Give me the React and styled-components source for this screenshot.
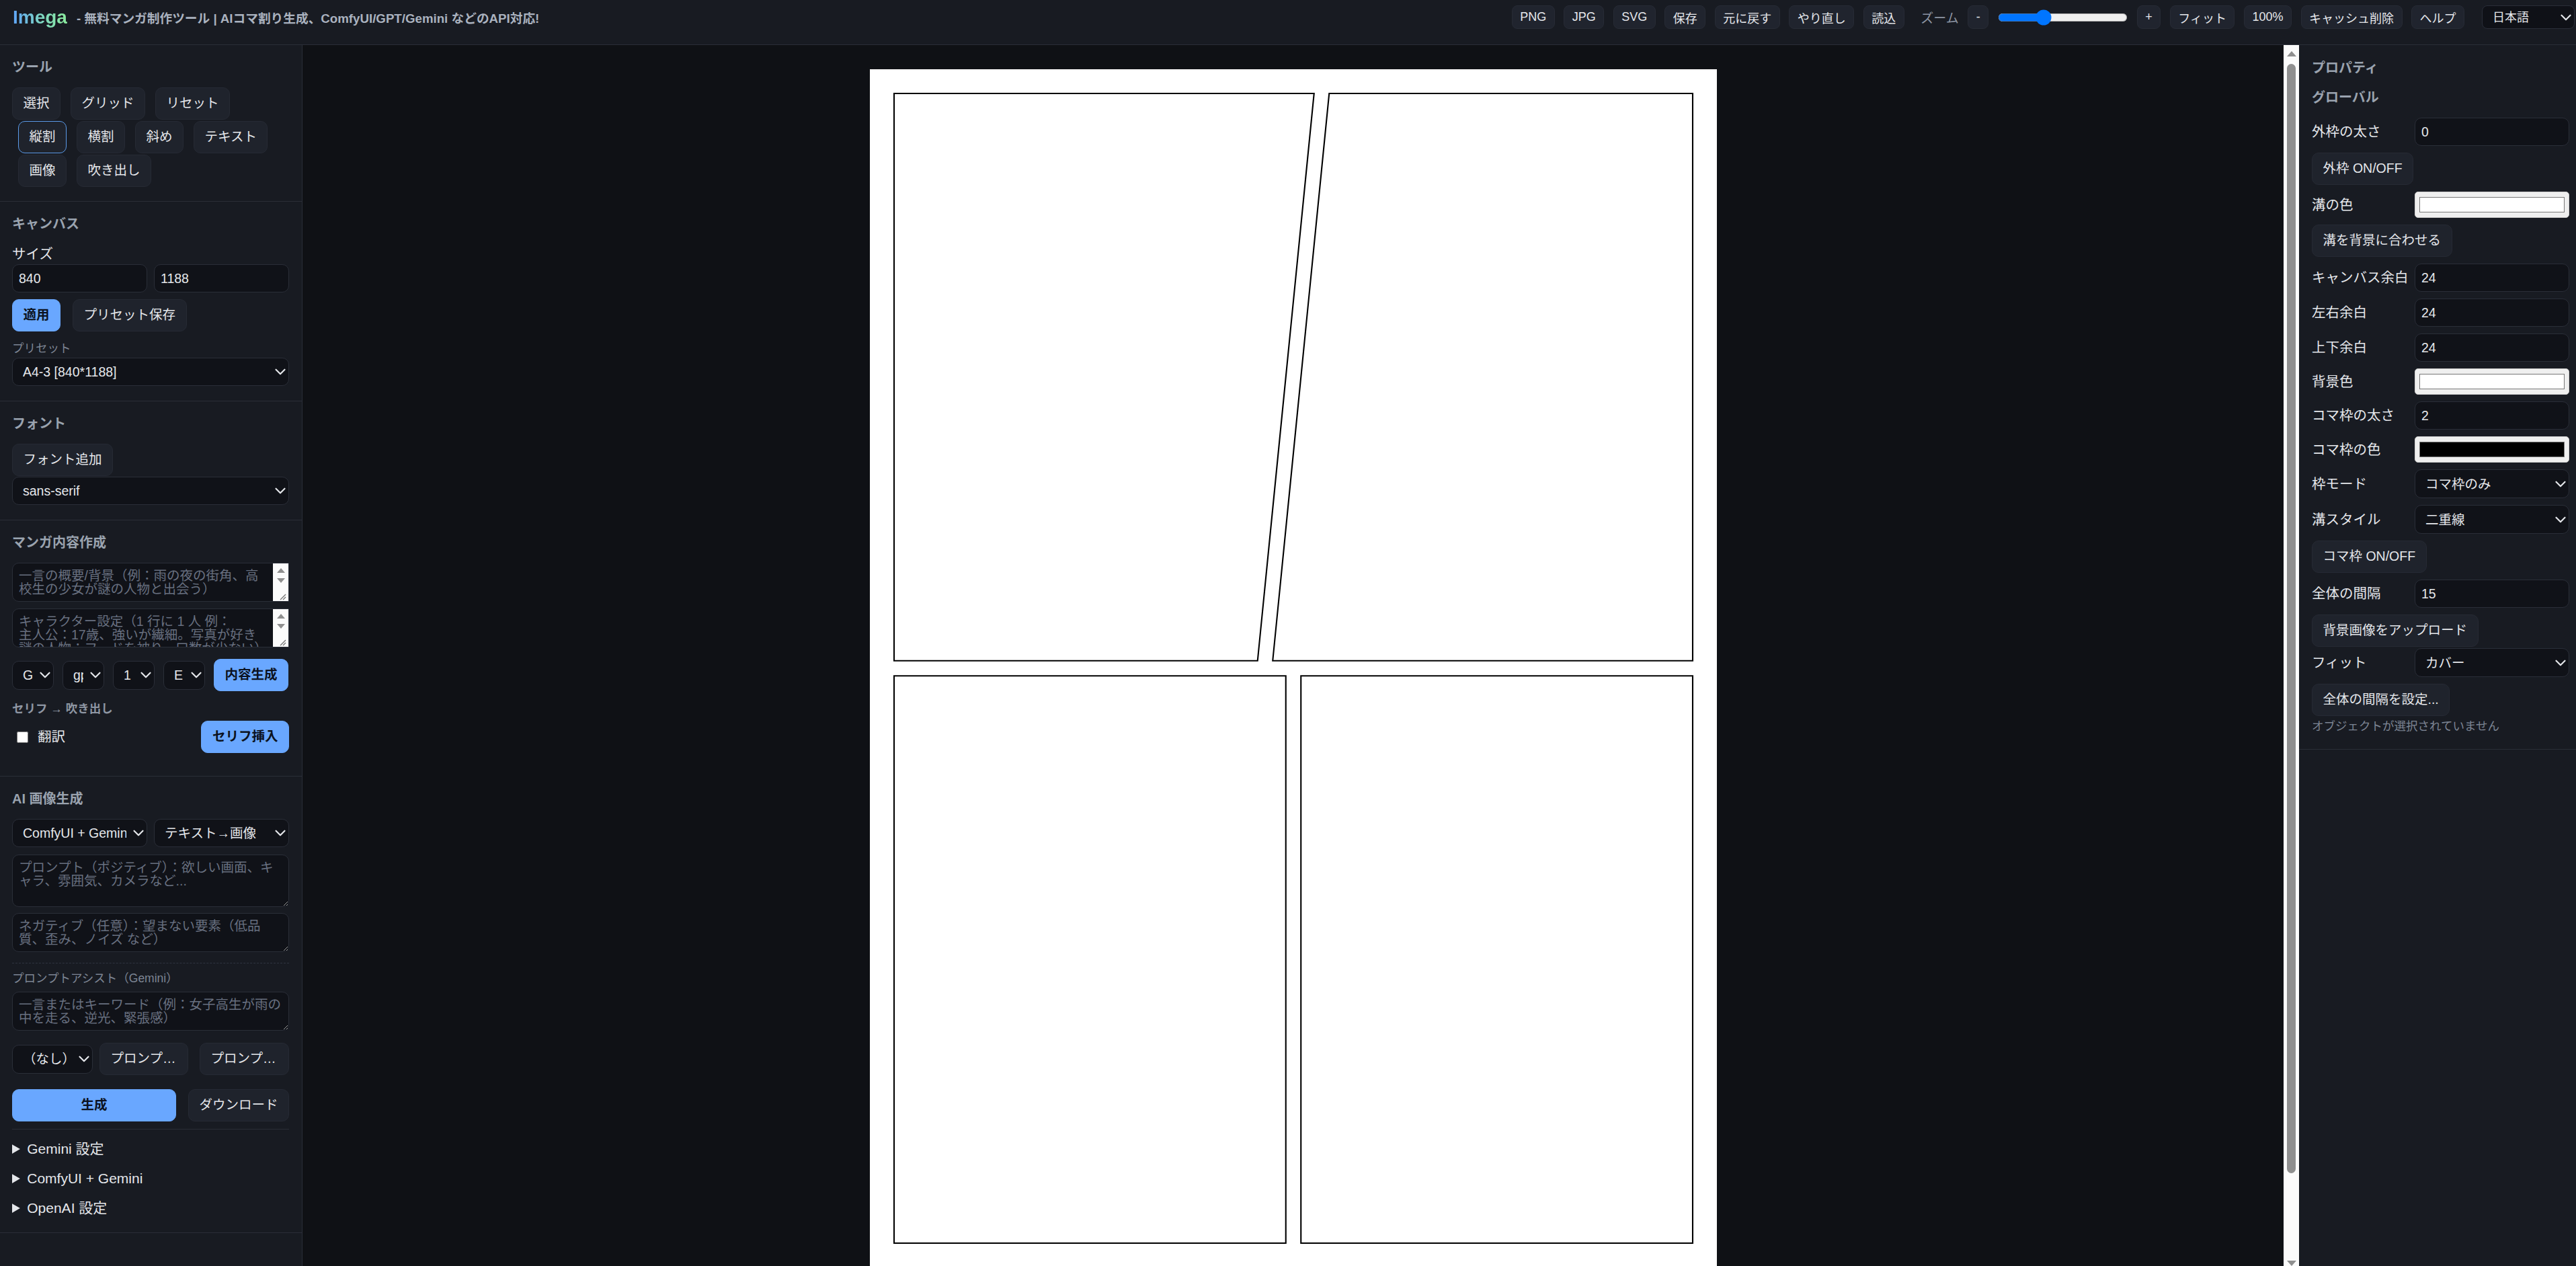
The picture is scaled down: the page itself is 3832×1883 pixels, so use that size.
import React from 'react'
import styled, { createGlobalStyle } from 'styled-components'
import { ChevronDown } from 'lucide-react'

const GlobalStyle = createGlobalStyle`
  html, body { margin: 0; height: 100%; background: #0f1115; }
  body {
    font-family: "Liberation Sans", "Noto Sans CJK JP", sans-serif;
    color: #e5e7eb;
    overflow: hidden;
  }
  * { box-sizing: border-box; }
`

// ---------- header ----------
const Shell = styled.div`
  height: 100vh;
  display: flex;
  flex-direction: column;
`

const TopBar = styled.header`
  flex: none;
  height: 67px;
  display: flex;
  align-items: center;
  padding: 0 2px 15px 19px;
  background: #181b22;
  border-bottom: 1px solid #2a2e37;
`

const Logo = styled.span`
  font-size: 28px;
  font-weight: 700;
  line-height: 35px;
  background: linear-gradient(90deg, #5fa4f8 0%, #7fd9c0 55%, #8aea9c 100%);
  -webkit-background-clip: text;
  background-clip: text;
  color: transparent;
`

const Tagline = styled.span`
  margin-left: 14px;
  font-size: 18.7px;
  font-weight: 600;
  color: #aab2bf;
  white-space: nowrap;
`

const TopActions = styled.div`
  margin-left: auto;
  display: flex;
  align-items: center;
  gap: 13.5px;
`

const TopButton = styled.button`
  height: 35px;
  padding: 0 11.5px;
  font-family: inherit;
  font-size: 18px;
  color: #e5e7eb;
  background: #20242e;
  border: 1px solid #272b35;
  border-radius: 8px;
  white-space: nowrap;
`

const ZoomLabel = styled.span`
  margin-left: 11px;
  font-size: 19px;
  color: #8d95a3;
`

const ZoomRange = styled.input`
  zoom: 1.5;
  width: 129px;
  margin: 0;
`

// ---------- select with caret ----------
const SelectWrap = styled.div`
  position: relative;
  flex: none;
  width: ${p => (p.$w ? `${p.$w}px` : '100%')};
  min-width: 0;
  margin-top: ${p => p.$mt ?? 0}px;
  margin-left: ${p => p.$ml ?? 0}px;
`

const SelectField = styled.select`
  display: block;
  appearance: none;
  -webkit-appearance: none;
  width: 100%;
  height: ${p => p.$h ?? 42}px;
  padding: 0 30px 0 15px;
  font-family: inherit;
  font-size: ${p => (p.$h === 35 ? 18 : 19.5)}px;
  color: #e5e7eb;
  background: ${p => (p.$h === 35 ? '#0f1117' : '#101218')};
  border: 1px solid #2a2e38;
  border-radius: ${p => (p.$h === 35 ? 8 : 10)}px;
  white-space: nowrap;
  overflow: hidden;
`

const Caret = styled(ChevronDown)`
  position: absolute;
  right: 0;
  top: 50%;
  transform: translateY(-50%);
  color: #e5e7eb;
  pointer-events: none;
`

const Dropdown = ({ w, h, mt, ml, value, children }) => (
  <SelectWrap $w={w} $mt={mt} $ml={ml}>
    <SelectField $h={h} defaultValue={value}>{children}</SelectField>
    <Caret size={26} strokeWidth={2} />
  </SelectWrap>
)

// ---------- layout ----------
const Body = styled.div`
  flex: 1;
  display: flex;
  min-height: 0;
`

const LeftPanel = styled.aside`
  flex: none;
  width: 450px;
  background: #181b22;
  border-right: 1px solid #2a2e37;
  overflow: hidden;
`

const Section = styled.section`
  display: flex;
  flex-direction: column;
  padding: 21px 19px ${p => p.$pb ?? 22}px 18px;
  border-bottom: 1px solid #2a2e37;
`

const SectionTitle = styled.h3`
  margin: 0 0 18px;
  font-size: 20px;
  line-height: 24px;
  font-weight: 700;
  color: #9aa3af;
`

const ToolRow = styled.div`
  display: flex;
  gap: 15px;
  padding-left: ${p => (p.$indent ? 9 : 0)}px;
  & + & { margin-top: 2px; }
`

const Btn = styled.button`
  flex: ${p => (p.$grow ? 1 : 'none')};
  width: ${p => (p.$w ? `${p.$w}px` : 'auto')};
  height: 48px;
  margin-left: ${p => (p.$push ? 'auto' : '0')};
  padding: 0 15.5px;
  font-family: inherit;
  font-size: 19.5px;
  line-height: 1;
  font-weight: ${p => (p.$primary ? 700 : 400)};
  color: ${p => (p.$primary ? '#0b1220' : '#e5e7eb')};
  background: ${p => (p.$primary ? '#69a7ff' : '#1f232c')};
  border: ${p => (p.$active ? '1.5px solid #5b9bea' : p.$primary ? '1px solid #69a7ff' : '1px solid #262a34')};
  border-radius: 10px;
  white-space: nowrap;
  overflow: hidden;
  text-overflow: ellipsis;
  align-self: flex-start;
`

const FieldLabel = styled.div`
  font-size: 20.5px;
  line-height: 30px;
  color: #e5e7eb;
  white-space: nowrap;
`

const SmallLabel = styled.div`
  margin-top: ${p => p.$mt ?? 0}px;
  font-size: 17.5px;
  line-height: 24px;
  font-weight: ${p => (p.$bold ? 700 : 400)};
  color: ${p => (p.$bold ? '#8e96a3' : '#7d8594')};
`

const Pair = styled.div`
  display: grid;
  grid-template-columns: 1fr 1fr;
  column-gap: 10px;
  margin-top: ${p => p.$mt ?? 0}px;
`

const TextInput = styled.input`
  display: block;
  width: 100%;
  min-width: 0;
  height: 42px;
  padding: 0 9px;
  font-family: inherit;
  font-size: 19.5px;
  color: #e5e7eb;
  background: #101218;
  border: 1px solid #2a2e38;
  border-radius: 10px;
`

const ButtonRow = styled.div`
  display: flex;
  align-items: center;
  gap: ${p => p.$gap ?? 18}px;
  margin-top: ${p => p.$mt ?? 0}px;
`

const TextArea = styled.textarea`
  display: block;
  width: 100%;
  height: ${p => (p.$tall ? 78 : 58)}px;
  margin-top: ${p => p.$mt ?? 0}px;
  padding: 8px 9px;
  font-family: inherit;
  font-size: 19.5px;
  line-height: 20px;
  color: #e5e7eb;
  background: #101218;
  border: 1px solid #2a2e38;
  border-radius: 10px;
  resize: vertical;
  overflow: hidden;
  &::placeholder { color: #687080; }
`

// textarea with a light classic scrollbar on its right side
const ScrollBox = styled.div`
  display: flex;
  height: 58px;
  margin-top: ${p => p.$mt ?? 0}px;
  background: #101218;
  border: 1px solid #2a2e38;
  border-radius: 10px 0 0 10px;
  overflow: hidden;
`

const BoxText = styled(TextArea)`
  flex: 1;
  min-width: 0;
  height: 100%;
  margin: 0;
  border: none;
  border-radius: 0;
  background: transparent;
  resize: none;
`

const MiniRail = styled.div`
  flex: none;
  width: 23px;
  display: flex;
  flex-direction: column;
  align-items: center;
  background: #fbfbfb;
  padding-top: 4px;
`

const Arrow = styled.div`
  width: 0;
  height: 0;
  border-left: ${p => p.$size ?? 6}px solid transparent;
  border-right: ${p => p.$size ?? 6}px solid transparent;
  ${p => (p.$down ? 'border-top' : 'border-bottom')}: ${p => (p.$size ?? 6) + 1}px solid #8f8f8f;
  margin-top: ${p => p.$mt ?? 0}px;
`

const Grip = styled.svg`
  margin-top: auto;
  align-self: flex-end;
  display: block;
`

const CheckRow = styled.div`
  display: flex;
  align-items: center;
  margin-top: 6px;
`

const Check = styled.input`
  width: 17px;
  height: 17px;
  margin: 0 14px 0 7px;
`

const DashedRule = styled.hr`
  margin: 16px 0 0;
  border: none;
  border-top: 1px dashed #2f3440;
`

const Rule = styled.hr`
  margin: 11px 0 0;
  border: none;
  border-top: 1px solid #2a2e37;
`

const Disclosures = styled.div`
  display: flex;
  flex-direction: column;
  gap: 14px;
  margin: 14px 0 21px;
`

const Summary = styled.summary`
  font-size: 21px;
  line-height: 30px;
  color: #e5e7eb;
  cursor: pointer;
`

// ---------- stage ----------
const Stage = styled.div`
  flex: 1;
  min-width: 0;
  display: flex;
  background: #0f1115;
`

const Viewport = styled.main`
  flex: 1;
  min-width: 0;
  overflow: hidden;
  padding-top: 36px;
`

const Page = styled.svg`
  display: block;
  margin: 0 auto;
  width: 1260px;
  height: 1782px;
  background: #fff;
`

const Rail = styled.div`
  flex: none;
  width: 23px;
  display: flex;
  flex-direction: column;
  align-items: center;
  background: #fbfbfb;
  padding-top: 9px;
`

const RailThumb = styled.div`
  width: 13px;
  height: 1650px;
  margin-top: 11px;
  border-radius: 7px;
  background: #8f8f8f;
`

const RailEnd = styled.div`
  margin-top: auto;
  height: 8px;
  overflow: hidden;
`

// ---------- right panel ----------
const RightPanel = styled.aside`
  flex: none;
  width: 412px;
  background: #181b22;
  overflow: hidden;
`

const PropsBlock = styled.div`
  display: flex;
  flex-direction: column;
  padding: 22px 10px 22px 19px;
  border-bottom: 1px solid #2a2e37;
`

const PanelTitle = styled.h3`
  margin: 0 0 ${p => p.$mb ?? 20}px;
  font-size: 20px;
  line-height: 24px;
  font-weight: 700;
  color: #9aa3af;
`

const PropList = styled.div`
  display: flex;
  flex-direction: column;
  gap: 10px;
`

const Field = styled.div`
  display: grid;
  grid-template-columns: 147px 1fr;
  column-gap: 6px;
  align-items: center;
  margin-top: ${p => (p.$snug ? -8 : 0)}px;
`

const ColorInput = styled.input`
  display: block;
  width: 100%;
  height: 39px;
  padding: 0 6px;
  background: #efefef;
  border: 1px solid #cfcfcf;
  border-radius: 5px;
  &::-webkit-color-swatch-wrapper { padding: 7px 0; }
  &::-webkit-color-swatch { border: 1px solid #777; border-radius: 0; }
`

const Hint = styled.div`
  margin-top: -7px;
  font-size: 17.5px;
  line-height: 24px;
  color: #7d8594;
`

const noop = () => {}

const ScrollText = ({ mt, placeholder }) => (
  <ScrollBox $mt={mt}>
    <BoxText placeholder={placeholder} />
    <MiniRail>
      <Arrow $mt={3} />
      <Arrow $down $mt={8} />
      <Grip width="23" height="21" viewBox="0 0 23 21">
        <path d="M19 11 L11 19 M19 15 L15 19" stroke="#777" strokeWidth="1.4" />
      </Grip>
    </MiniRail>
  </ScrollBox>
)

const App = () => {
  return (
    <Shell>
      <GlobalStyle />
      <TopBar>
        <Logo>Imega</Logo>
        <Tagline>- 無料マンガ制作ツール | AIコマ割り生成、ComfyUI/GPT/Gemini などのAPI対応!</Tagline>
        <TopActions>
          <TopButton>PNG</TopButton>
          <TopButton>JPG</TopButton>
          <TopButton>SVG</TopButton>
          <TopButton>保存</TopButton>
          <TopButton>元に戻す</TopButton>
          <TopButton>やり直し</TopButton>
          <TopButton>読込</TopButton>
          <ZoomLabel>ズーム</ZoomLabel>
          <TopButton>-</TopButton>
          <ZoomRange type="range" min="0.25" max="4" step="0.05" defaultValue="1.5" />
          <TopButton>+</TopButton>
          <TopButton>フィット</TopButton>
          <TopButton>100%</TopButton>
          <TopButton>キャッシュ削除</TopButton>
          <TopButton>ヘルプ</TopButton>
        </TopActions>
        <Dropdown w={138} h={35} ml={26} value="ja">
          <option value="ja">日本語</option>
          <option value="en">English</option>
        </Dropdown>
      </TopBar>

      <Body>
        <LeftPanel>
          <Section $pb={21}>
            <SectionTitle>ツール</SectionTitle>
            <ToolRow>
              <Btn>選択</Btn>
              <Btn>グリッド</Btn>
              <Btn>リセット</Btn>
            </ToolRow>
            <ToolRow $indent>
              <Btn $active>縦割</Btn>
              <Btn>横割</Btn>
              <Btn>斜め</Btn>
              <Btn>テキスト</Btn>
            </ToolRow>
            <ToolRow $indent>
              <Btn>画像</Btn>
              <Btn>吹き出し</Btn>
            </ToolRow>
          </Section>

          <Section>
            <SectionTitle>キャンバス</SectionTitle>
            <FieldLabel>サイズ</FieldLabel>
            <Pair>
              <TextInput defaultValue="840" />
              <TextInput defaultValue="1188" />
            </Pair>
            <ButtonRow $mt={10}>
              <Btn $primary>適用</Btn>
              <Btn>プリセット保存</Btn>
            </ButtonRow>
            <SmallLabel $mt={13}>プリセット</SmallLabel>
            <Dropdown mt={2} value="a4">
              <option value="a4">A4-3 [840*1188]</option>
            </Dropdown>
          </Section>

          <Section>
            <SectionTitle>フォント</SectionTitle>
            <Btn>フォント追加</Btn>
            <Dropdown mt={1} value="sans">
              <option value="sans">sans-serif</option>
            </Dropdown>
          </Section>

          <Section $pb={34}>
            <SectionTitle>マンガ内容作成</SectionTitle>
            <ScrollText placeholder="一言の概要/背景（例：雨の夜の街角、高校生の少女が謎の人物と出会う）" />
            <ScrollText
              mt={10}
              placeholder={'キャラクター設定（1 行に 1 人 例：\n主人公：17歳、強いが繊細。写真が好き\n謎の人物：フードを被り、口数が少ない）'}
            />
            <ButtonRow $gap={13} $mt={17}>
              <Dropdown w={62} h={43} value="g">
                <option value="g">Gemini</option>
              </Dropdown>
              <Dropdown w={62} h={43} value="m">
                <option value="m">gpt-4o-mini</option>
              </Dropdown>
              <Dropdown w={62} h={43} value="1">
                <option value="1">1</option>
              </Dropdown>
              <Dropdown w={62} h={43} value="e">
                <option value="e">E</option>
              </Dropdown>
              <Btn $primary>内容生成</Btn>
            </ButtonRow>
            <SmallLabel $bold $mt={14}>セリフ → 吹き出し</SmallLabel>
            <CheckRow>
              <Check type="checkbox" />
              <FieldLabel>翻訳</FieldLabel>
              <Btn $primary $push>セリフ挿入</Btn>
            </CheckRow>
          </Section>

          <Section $pb={0}>
            <SectionTitle>AI 画像生成</SectionTitle>
            <Pair>
              <Dropdown value="cg">
                <option value="cg">ComfyUI + Gemini</option>
              </Dropdown>
              <Dropdown value="t2i">
                <option value="t2i">テキスト→画像</option>
              </Dropdown>
            </Pair>
            <TextArea $tall $mt={11} placeholder="プロンプト（ポジティブ）：欲しい画面、キャラ、雰囲気、カメラなど..." />
            <TextArea $mt={9} placeholder="ネガティブ（任意）：望まない要素（低品質、歪み、ノイズ など）" />
            <DashedRule />
            <SmallLabel $mt={10}>プロンプトアシスト（Gemini）</SmallLabel>
            <TextArea $mt={8} placeholder="一言またはキーワード（例：女子高生が雨の中を走る、逆光、緊張感）" />
            <ButtonRow $gap={10} $mt={18}>
              <Dropdown w={120} h={43} value="none">
                <option value="none">（なし）</option>
              </Dropdown>
              <Btn $w={132}>プロンプト生成</Btn>
              <Btn $w={133} $push>プロンプト翻訳</Btn>
            </ButtonRow>
            <ButtonRow $mt={21}>
              <Btn $primary $grow>生成</Btn>
              <Btn>ダウンロード</Btn>
            </ButtonRow>
            <Rule />
            <Disclosures>
              <details><Summary>Gemini 設定</Summary></details>
              <details><Summary>ComfyUI + Gemini</Summary></details>
              <details><Summary>OpenAI 設定</Summary></details>
            </Disclosures>
          </Section>
        </LeftPanel>

        <Stage>
          <Viewport>
            <Page viewBox="0 0 840 1188">
              <g fill="#fff" stroke="#000" strokeWidth="1.4" strokeLinejoin="miter">
                <polygon points="24,24 440.5,24 384.5,586.5 24,586.5" />
                <polygon points="455.5,24 816,24 816,586.5 399.5,586.5" />
                <polygon points="24,601.5 412.5,601.5 412.5,1164 24,1164" />
                <polygon points="427.5,601.5 816,601.5 816,1164 427.5,1164" />
              </g>
            </Page>
          </Viewport>
          <Rail>
            <Arrow $size={7} />
            <RailThumb />
            <RailEnd>
              <Arrow $size={7} $down />
            </RailEnd>
          </Rail>
        </Stage>

        <RightPanel>
          <PropsBlock>
            <PanelTitle>プロパティ</PanelTitle>
            <PanelTitle $mb={18}>グローバル</PanelTitle>
            <PropList>
              <Field><FieldLabel>外枠の太さ</FieldLabel><TextInput defaultValue="0" /></Field>
              <Btn>外枠 ON/OFF</Btn>
              <Field><FieldLabel>溝の色</FieldLabel><ColorInput type="color" value="#ffffff" onChange={noop} /></Field>
              <Btn>溝を背景に合わせる</Btn>
              <Field><FieldLabel>キャンバス余白</FieldLabel><TextInput defaultValue="24" /></Field>
              <Field><FieldLabel>左右余白</FieldLabel><TextInput defaultValue="24" /></Field>
              <Field><FieldLabel>上下余白</FieldLabel><TextInput defaultValue="24" /></Field>
              <Field><FieldLabel>背景色</FieldLabel><ColorInput type="color" value="#ffffff" onChange={noop} /></Field>
              <Field><FieldLabel>コマ枠の太さ</FieldLabel><TextInput defaultValue="2" /></Field>
              <Field><FieldLabel>コマ枠の色</FieldLabel><ColorInput type="color" value="#000000" onChange={noop} /></Field>
              <Field>
                <FieldLabel>枠モード</FieldLabel>
                <Dropdown h={43} value="k"><option value="k">コマ枠のみ</option></Dropdown>
              </Field>
              <Field>
                <FieldLabel>溝スタイル</FieldLabel>
                <Dropdown h={43} value="d"><option value="d">二重線</option></Dropdown>
              </Field>
              <Btn>コマ枠 ON/OFF</Btn>
              <Field><FieldLabel>全体の間隔</FieldLabel><TextInput defaultValue="15" /></Field>
              <Btn>背景画像をアップロード</Btn>
              <Field $snug>
                <FieldLabel>フィット</FieldLabel>
                <Dropdown h={43} value="cover"><option value="cover">カバー</option></Dropdown>
              </Field>
              <Btn>全体の間隔を設定...</Btn>
              <Hint>オブジェクトが選択されていません</Hint>
            </PropList>
          </PropsBlock>
        </RightPanel>
      </Body>
    </Shell>
  )
}

export default App
